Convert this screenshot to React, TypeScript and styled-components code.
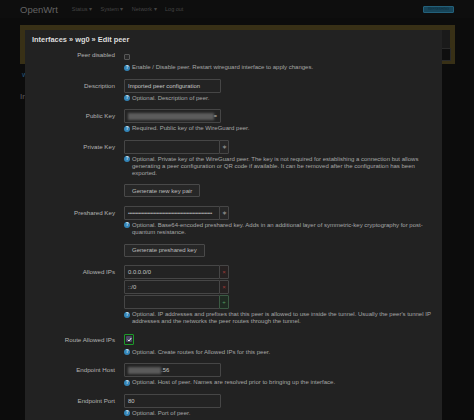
import React from 'react';
import styled, { createGlobalStyle } from 'styled-components';

const GlobalStyle = createGlobalStyle`
  html, body {
    margin: 0;
    padding: 0;
    background: #0c0c0c;
  }
  body {
    font-family: "Liberation Sans", Arial, sans-serif;
  }
`;

const Page = styled.div`
  position: relative;
  width: 474px;
  height: 420px;
  overflow: hidden;
  background: #0c0c0c;
`;

const Header = styled.header`
  display: flex;
  align-items: center;
  height: 18px;
  padding: 0 20px 0 20px;
  background: #0e0e0e;
`;
const Brand = styled.span`
  font-size: 9.5px;
  color: #636363;
  margin-right: 14px;
`;
const Nav = styled.nav`
  display: flex;
  gap: 8.5px;
  flex: 1;
`;
const NavItem = styled.span`
  font-size: 5.5px;
  color: #454545;
`;
const Badge = styled.span`
  box-sizing: border-box;
  width: 31px;
  height: 7px;
  line-height: 5px;
  font-size: 3.2px;
  text-align: center;
  color: #0d2c3b;
  background: #174559;
  border: 1px solid #23607a;
  border-radius: 1px;
`;

const Content = styled.main`
  padding: 7px 19px 0 20px;
`;
const Alert = styled.div`
  display: flex;
  justify-content: flex-end;
  align-items: flex-end;
  box-sizing: border-box;
  height: 39px;
  border: 5px solid #383016;
  border-bottom-width: 3px;
  background: #1a1a1a;
`;
const AlertButton = styled.span`
  width: 8px;
  height: 11px;
  margin-right: -1px;
  background: #0f0f0f;
  border: 1px solid #2a2a2a;
`;
const TabLink = styled.div`
  margin: 8px 0 0 2px;
  font-size: 5.5px;
  color: #2a6287;
`;
const PageTitle = styled.h2`
  margin: 14px 0 0;
  font-size: 8px;
  font-weight: normal;
  color: #5e5e5e;
`;

const Modal = styled.div`
  position: absolute;
  left: 25px;
  top: 30px;
  width: 417px;
  height: 400px;
  box-sizing: border-box;
  padding: 5px 0 0 7px;
  background: #222222;
  color: #b8b8b8;
`;
const Title = styled.h4`
  margin: 0 0 3px;
  font-size: 7.4px;
  line-height: 10px;
  font-weight: bold;
  color: #dddddd;
`;
const Row = styled.div`
  display: grid;
  grid-template-columns: 83px 308px;
  column-gap: 9px;
  margin-bottom: 7.6px;
`;
const Label = styled.label`
  height: 14px;
  line-height: 14px;
  font-size: 6.2px;
  text-align: right;
  color: #b3b3b3;
  white-space: nowrap;
`;
const FieldColumn = styled.div`
  display: flex;
  flex-direction: column;
  gap: 1px;
`;
const InputGroup = styled.div`
  display: flex;
  height: 14px;
`;
const TextBox = styled.div<{ $grouped?: boolean }>`
  display: flex;
  align-items: center;
  box-sizing: border-box;
  width: ${({ $grouped }) => ($grouped ? '96px' : '97px')};
  height: 14px;
  padding: 0 3px;
  overflow: hidden;
  white-space: nowrap;
  font-size: 5.9px;
  color: #c6c6c6;
  background: #232323;
  border: 1px solid #464646;
  border-radius: 1px;
`;
const Redacted = styled.span<{ $w: number }>`
  display: inline-block;
  width: ${({ $w }) => $w}px;
  height: 7px;
  background: #5b5b5b;
  filter: blur(1.2px);
`;
const Dots = styled.span`
  font-size: 5px;
  letter-spacing: -0.25px;
  color: #b0b0b0;
`;
const SideButton = styled.span<{ $tone?: 'plain' | 'remove' | 'add' }>`
  display: flex;
  align-items: center;
  justify-content: center;
  box-sizing: border-box;
  width: 10px;
  height: 14px;
  margin-left: -1px;
  font-size: 6px;
  border-radius: 1px;
  color: ${({ $tone }) => ($tone === 'remove' ? '#a23a3a' : $tone === 'add' ? '#4f9a5f' : '#9a9a9a')};
  background: ${({ $tone }) => ($tone === 'remove' ? '#262121' : $tone === 'add' ? '#1f2b22' : '#272727')};
  border: 1px solid ${({ $tone }) => ($tone === 'add' ? '#3b5a43' : '#464646')};
`;
const Check = styled.span`
  align-self: center;
  box-sizing: border-box;
  width: 6px;
  height: 6px;
  margin-top: 4px;
  background: #2a2a2a;
  border: 1px solid #585858;
  border-radius: 1px;
`;
const CheckRing = styled.span`
  display: flex;
  align-items: center;
  justify-content: center;
  box-sizing: border-box;
  width: 10px;
  height: 11px;
  margin-top: 1px;
  border: 1.5px solid #1c9a2a;
  border-radius: 1px;
`;
const CheckBox = styled.span`
  display: flex;
  align-items: center;
  justify-content: center;
  width: 6px;
  height: 6px;
  background: #4c4866;
  border-radius: 1px;
`;
const Help = styled.div`
  display: flex;
  gap: 2px;
  margin-top: 1px;
`;
const HelpIcon = styled.span`
  flex: none;
  width: 6px;
  height: 6px;
  margin-top: 0.5px;
  border-radius: 50%;
  background: #3385b8;
  color: #e8f2f8;
  font-size: 4.5px;
  font-weight: bold;
  line-height: 6px;
  text-align: center;
`;
const HelpText = styled.div`
  width: 300px;
  font-size: 6px;
  line-height: 7px;
  color: #a6a6a6;
`;
const ActionButton = styled.button`
  align-self: flex-start;
  height: 13px;
  padding: 0 7px;
  font-family: inherit;
  font-size: 6px;
  color: #bdbdbd;
  background: #272727;
  border: 1px solid #494949;
  border-radius: 1px;
`;

const HelpLine = ({ children }: { children: React.ReactNode }) => (
  <Help>
    <HelpIcon>?</HelpIcon>
    <HelpText>{children}</HelpText>
  </Help>
);

interface FieldRowProps {
  label?: string;
  children: React.ReactNode;
  help?: string;
};
const FieldRow = ({ label, children, help }: FieldRowProps) => (
  <Row>
    <Label>{label}</Label>
    <FieldColumn>
      {children}
      {help && <HelpLine>{help}</HelpLine>}
    </FieldColumn>
  </Row>
);

const App = () => {
  return (
    <Page>
      <GlobalStyle />
      <Header>
        <Brand>OpenWrt</Brand>
        <Nav>
          <NavItem>Status ▾</NavItem>
          <NavItem>System ▾</NavItem>
          <NavItem>Network ▾</NavItem>
          <NavItem>Log out</NavItem>
        </Nav>
        <Badge>REFRESHING</Badge>
      </Header>
      <Content>
        <Alert>
          <AlertButton />
        </Alert>
        <TabLink>Wireless</TabLink>
        <PageTitle>Interfaces</PageTitle>
      </Content>

      <Modal>
        <Title>Interfaces » wg0 » Edit peer</Title>

        <FieldRow
          label='Peer disabled'
          help='Enable / Disable peer. Restart wireguard interface to apply changes.'
        >
          <InputGroup>
            <Check />
          </InputGroup>
        </FieldRow>

        <FieldRow label='Description' help='Optional. Description of peer.'>
          <TextBox>Imported peer configuration</TextBox>
        </FieldRow>

        <FieldRow label='Public Key' help='Required. Public key of the WireGuard peer.'>
          <TextBox>
            <Redacted $w={86} />
            <span>=</span>
          </TextBox>
        </FieldRow>

        <FieldRow
          label='Private Key'
          help='Optional. Private key of the WireGuard peer. The key is not required for establishing a connection but allows generating a peer configuration or QR code if available. It can be removed after the configuration has been exported.'
        >
          <InputGroup>
            <TextBox $grouped />
            <SideButton>∗</SideButton>
          </InputGroup>
        </FieldRow>

        <FieldRow>
          <ActionButton>Generate new key pair</ActionButton>
        </FieldRow>

        <FieldRow
          label='Preshared Key'
          help='Optional. Base64-encoded preshared key. Adds in an additional layer of symmetric-key cryptography for post-quantum resistance.'
        >
          <InputGroup>
            <TextBox $grouped>
              <Dots>{'•'.repeat(56)}</Dots>
            </TextBox>
            <SideButton>∗</SideButton>
          </InputGroup>
        </FieldRow>

        <FieldRow>
          <ActionButton>Generate preshared key</ActionButton>
        </FieldRow>

        <FieldRow
          label='Allowed IPs'
          help="Optional. IP addresses and prefixes that this peer is allowed to use inside the tunnel. Usually the peer's tunnel IP addresses and the networks the peer routes through the tunnel."
        >
          <InputGroup>
            <TextBox $grouped>0.0.0.0/0</TextBox>
            <SideButton $tone='remove'>×</SideButton>
          </InputGroup>
          <InputGroup>
            <TextBox $grouped>::/0</TextBox>
            <SideButton $tone='remove'>×</SideButton>
          </InputGroup>
          <InputGroup>
            <TextBox $grouped />
            <SideButton $tone='add'>+</SideButton>
          </InputGroup>
        </FieldRow>

        <FieldRow label='Route Allowed IPs' help='Optional. Create routes for Allowed IPs for this peer.'>
          <InputGroup>
            <CheckRing>
              <CheckBox>
                <svg width='5' height='5' viewBox='0 0 10 10'>
                  <polyline points='1.5,5.5 4,8 8.5,2' fill='none' stroke='#f2f2f2' strokeWidth='2' />
                </svg>
              </CheckBox>
            </CheckRing>
          </InputGroup>
        </FieldRow>

        <FieldRow
          label='Endpoint Host'
          help='Optional. Host of peer. Names are resolved prior to bringing up the interface.'
        >
          <TextBox>
            <Redacted $w={33} />
            <span>.56</span>
          </TextBox>
        </FieldRow>

        <FieldRow label='Endpoint Port' help='Optional. Port of peer.'>
          <TextBox>80</TextBox>
        </FieldRow>
      </Modal>
    </Page>
  );
};

export default App;
